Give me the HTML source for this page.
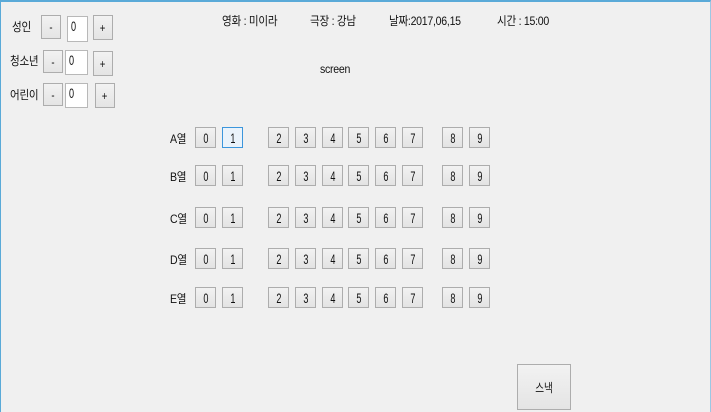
<!DOCTYPE html>
<html><head><meta charset="utf-8"><style>
*{margin:0;padding:0;box-sizing:border-box}
body{width:711px;height:412px;background:#f0f0f0;position:relative;overflow:hidden;font-family:"Liberation Sans","Noto Sans CJK KR",sans-serif;font-size:12px;color:#111}
.frame{position:absolute;left:0;top:0;width:711px;height:412px;border-top:2px solid #5aaad8;border-left:1px solid #5aaad8;border-right:1px solid #9cc8e4}
.t{position:absolute;white-space:nowrap;transform:scaleX(0.88);transform-origin:left top;letter-spacing:-0.3px}
.b{position:absolute;background:linear-gradient(#f2f2f2,#e4e4e4);border:1px solid #adadad;text-align:center;font-size:12px;display:flex;align-items:center;justify-content:center}
.b span{display:inline-block;transform:scaleX(0.8)}
.box{position:absolute;background:#fff;border:1px solid #b8b8b8;padding-left:3px;font-size:14px;line-height:18px}
.box span{display:inline-block;transform:scaleX(0.65);transform-origin:left}
.s{position:absolute;width:21px;height:21px;background:linear-gradient(#f2f2f2,#e3e3e3);border:1px solid #adadad;display:flex;align-items:center;justify-content:center;font-size:14px}
.s span{display:inline-block;transform:scaleX(0.65)}
.sel{border-color:#3c96dc;background:#eaf3fb}
</style></head><body>
<div class="frame"></div>
<div class="t" style="left:12px;top:18px">성인</div>
<div class="b" style="left:41px;top:15px;width:20px;height:24px"><span>-</span></div>
<div class="box" style="left:67px;top:16px;width:21px;height:26px"><span>0</span></div>
<div class="b" style="left:93px;top:15px;width:20px;height:25px"><span>+</span></div>

<div class="t" style="left:10px;top:52px">청소년</div>
<div class="b" style="left:43px;top:50px;width:20px;height:23px"><span>-</span></div>
<div class="box" style="left:65px;top:50px;width:23px;height:25px"><span>0</span></div>
<div class="b" style="left:93px;top:51px;width:20px;height:25px"><span>+</span></div>

<div class="t" style="left:10px;top:86px">어린이</div>
<div class="b" style="left:43px;top:83px;width:20px;height:23px"><span>-</span></div>
<div class="box" style="left:65px;top:83px;width:23px;height:25px"><span>0</span></div>
<div class="b" style="left:95px;top:83px;width:20px;height:25px"><span>+</span></div>

<div class="t" style="left:222px;top:12px">영화 : 미이라</div>
<div class="t" style="left:310px;top:12px">극장 : 강남</div>
<div class="t" style="left:389px;top:12px">날짜:2017,06,15</div>
<div class="t" style="left:497px;top:12px">시간 : 15:00</div>
<div class="t" style="left:320px;top:62px">screen</div>

<div id="seats"></div>
<div class="b" style="left:517px;top:364px;width:54px;height:46px"><span>스낵</span></div>
<script>
var rows=[["A",127],["B",165],["C",207],["D",248],["E",287]];
var xs=[195,222,268,295,322,348,375,402,442,469];
var h="";
rows.forEach(function(r,ri){
 h+='<div class="t" style="left:170px;top:'+(r[1]+3)+'px">'+r[0]+'열</div>';
 xs.forEach(function(x,i){
  h+='<div class="s'+(ri==0&&i==1?' sel':'')+'" style="left:'+x+'px;top:'+r[1]+'px"><span>'+i+'</span></div>';
 });
});
document.getElementById("seats").innerHTML=h;
</script>
</body></html>
